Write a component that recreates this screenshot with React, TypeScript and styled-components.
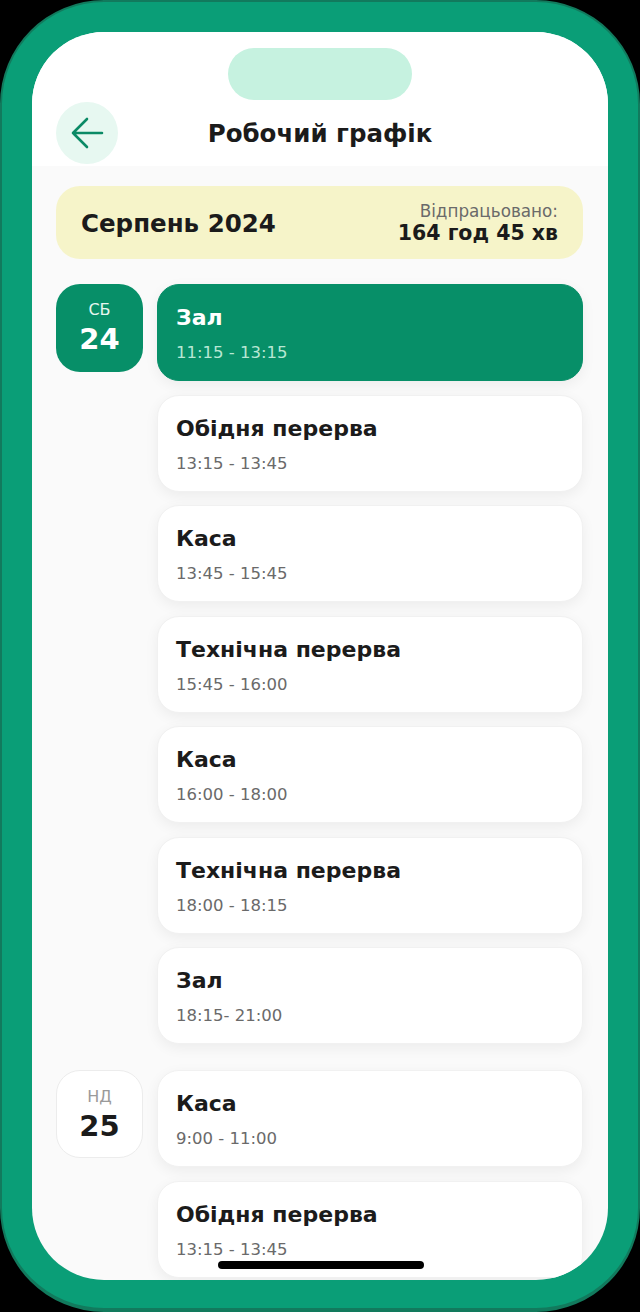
import React from "react";
import styled, { createGlobalStyle } from "styled-components";

const GlobalStyle = createGlobalStyle`
  html, body { margin: 0; padding: 0; background: #000; }
  body { font-family: "DejaVu Sans", "Inter", sans-serif; }
  * { box-sizing: border-box; }
`;

const Stage = styled.div`
  width: 640px;
  height: 1312px;
  background: #000;
  overflow: hidden;
`;

const Phone = styled.div`
  width: 640px;
  height: 1312px;
  background: #0a9e77;
  border: 2px solid #127a5d;
  border-bottom-width: 4px;
  border-radius: 104px;
  padding: 30px 30px 28px;
`;

const Screen = styled.div`
  position: relative;
  height: 100%;
  background: #fafafa;
  border-radius: 72px;
  overflow: hidden;
  display: flex;
  flex-direction: column;
`;

const Header = styled.div`
  background: #fff;
  padding: 16px 24px 0;
  display: flex;
  flex-direction: column;
  align-items: center;
`;

const Notch = styled.div`
  width: 184px;
  height: 52px;
  border-radius: 26px;
  background: #c6f2e0;
`;

const TitleRow = styled.div`
  position: relative;
  width: 100%;
  height: 66px;
  display: flex;
  align-items: center;
  justify-content: center;
`;

const BackButton = styled.button`
  position: absolute;
  left: 0;
  top: 2px;
  width: 62px;
  height: 62px;
  border-radius: 50%;
  border: none;
  background: #e7f8f1;
  display: flex;
  align-items: center;
  justify-content: center;
  padding: 0;
`;

const Title = styled.h1`
  margin: 0;
  font-size: 24.5px;
  font-weight: 700;
  color: #1b1b1b;
`;

const Content = styled.div`
  padding: 20px 25px 0 24px;
  display: flex;
  flex-direction: column;
`;

const Summary = styled.div`
  height: 73px;
  border-radius: 24px;
  background: #f6f4c9;
  display: flex;
  align-items: center;
  justify-content: space-between;
  padding: 0 25px;
  margin-bottom: 25px;
`;

const Month = styled.div`
  font-size: 24.5px;
  font-weight: 700;
  color: #1b1b1b;
  margin-top: 2px;
`;

const Worked = styled.div`
  display: flex;
  flex-direction: column;
  align-items: flex-end;
`;

const WorkedLabel = styled.div`
  font-size: 16.8px;
  color: #6a6a6a;
  line-height: 20px;
`;

const WorkedValue = styled.div`
  font-size: 20.5px;
  font-weight: 700;
  color: #1b1b1b;
  line-height: 24px;
`;

const DayGroup = styled.div`
  display: flex;
  gap: 14px;
  margin-bottom: 26px;
`;

const DayBadge = styled.div<{ $active?: boolean }>`
  flex: 0 0 87px;
  height: 88px;
  border-radius: 24px;
  display: flex;
  flex-direction: column;
  align-items: center;
  padding-top: 15px;
  background: ${({ $active }) => ($active ? "#078f68" : "#fff")};
  border: ${({ $active }) => ($active ? "none" : "1px solid #ececec")};
  color: ${({ $active }) => ($active ? "#fff" : "#1b1b1b")};
`;

const DayName = styled.div<{ $active?: boolean }>`
  font-size: 16px;
  line-height: 22px;
  color: ${({ $active }) => ($active ? "#e6f6ef" : "#9a9a9a")};
`;

const DayNum = styled.div`
  font-size: 29px;
  font-weight: 700;
  line-height: 36px;
`;

const Shifts = styled.div`
  flex: 1;
  display: flex;
  flex-direction: column;
  gap: 13.5px;
`;

const ShiftCard = styled.div<{ $active?: boolean }>`
  height: 97px;
  border-radius: 22px;
  padding: 19px 18px 0;
  background: ${({ $active }) => ($active ? "#078f68" : "#fff")};
  border: 1px solid ${({ $active }) => ($active ? "#078f68" : "#f1f1f1")};
  box-shadow: 0 4px 14px rgba(0, 0, 0, 0.06);
`;

const ShiftTitle = styled.div<{ $active?: boolean }>`
  font-size: 22px;
  font-weight: 700;
  line-height: 28px;
  color: ${({ $active }) => ($active ? "#fff" : "#1b1b1b")};
`;

const ShiftTime = styled.div<{ $active?: boolean }>`
  margin-top: 9px;
  font-size: 16.5px;
  line-height: 24px;
  color: ${({ $active }) => ($active ? "#b7e7d4" : "#6a6a6a")};
`;

const HomeBar = styled.div`
  position: absolute;
  left: 186px;
  bottom: 11px;
  width: 206px;
  height: 8px;
  border-radius: 4px;
  background: #000;
`;

type Shift = { title: string; time: string; active?: boolean };
type Day = { name: string; num: string; active?: boolean; shifts: Shift[] };

const days: Day[] = [
  {
    name: "СБ",
    num: "24",
    active: true,
    shifts: [
      { title: "Зал", time: "11:15 - 13:15", active: true },
      { title: "Обідня перерва", time: "13:15 - 13:45" },
      { title: "Каса", time: "13:45 - 15:45" },
      { title: "Технічна перерва", time: "15:45 - 16:00" },
      { title: "Каса", time: "16:00 - 18:00" },
      { title: "Технічна перерва", time: "18:00 - 18:15" },
      { title: "Зал", time: "18:15- 21:00" },
    ],
  },
  {
    name: "НД",
    num: "25",
    shifts: [
      { title: "Каса", time: "9:00 - 11:00" },
      { title: "Обідня перерва", time: "13:15 - 13:45" },
    ],
  },
];

const BackArrow = () => (
  <svg width="34" height="34" viewBox="0 0 34 34" fill="none">
    <path
      d="M32 17H3M17 3 3 17l14 14"
      stroke="#0b8a66"
      strokeWidth="2.6"
      strokeLinecap="round"
      strokeLinejoin="round"
    />
  </svg>
);

export default function App() {
  return (
    <Stage>
      <GlobalStyle />
      <Phone>
        <Screen>
          <Header>
            <Notch />
            <TitleRow>
              <BackButton aria-label="Назад">
                <BackArrow />
              </BackButton>
              <Title>Робочий графік</Title>
            </TitleRow>
          </Header>
          <Content>
            <Summary>
              <Month>Серпень 2024</Month>
              <Worked>
                <WorkedLabel>Відпрацьовано:</WorkedLabel>
                <WorkedValue>164 год 45 хв</WorkedValue>
              </Worked>
            </Summary>
            {days.map((d) => (
              <DayGroup key={d.num}>
                <DayBadge $active={d.active}>
                  <DayName $active={d.active}>{d.name}</DayName>
                  <DayNum>{d.num}</DayNum>
                </DayBadge>
                <Shifts>
                  {d.shifts.map((s, i) => (
                    <ShiftCard key={i} $active={s.active}>
                      <ShiftTitle $active={s.active}>{s.title}</ShiftTitle>
                      <ShiftTime $active={s.active}>{s.time}</ShiftTime>
                    </ShiftCard>
                  ))}
                </Shifts>
              </DayGroup>
            ))}
          </Content>
          <HomeBar />
        </Screen>
      </Phone>
    </Stage>
  );
}
